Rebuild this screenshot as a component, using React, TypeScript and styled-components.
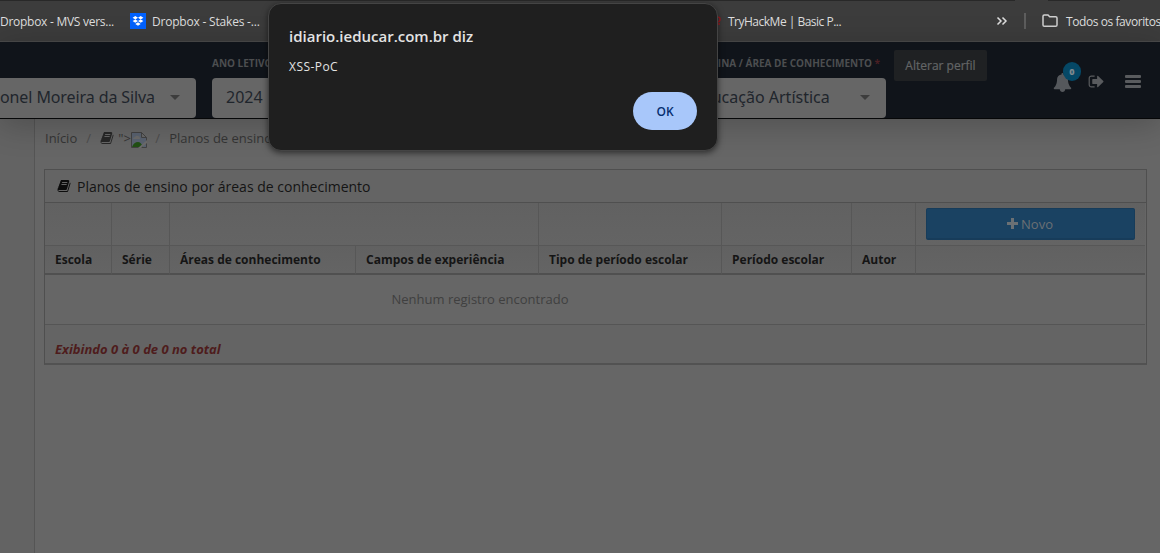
import React from "react";
import styled, { createGlobalStyle } from "styled-components";

const Global = createGlobalStyle`
  * { box-sizing: border-box; }
  body { margin: 0; background: #666; overflow: hidden; font-family: "Open Sans", sans-serif; }
`;

const Page = styled.div`
  position: relative;
  width: 1160px;
  height: 553px;
  display: flex;
  flex-direction: column;
  overflow: hidden;
  background: #666;
`;

const TabEdge = styled.div`
  flex: none;
  height: 1px;
  display: grid;
  grid-template-columns: 1015px 33px 72px 40px;
  background: #3c3c3c;
`;
const Edge = styled.i<{ $on?: boolean }>`
  background: ${(p) => (p.$on ? "#282828" : "#3c3c3c")};
`;

const Bookmarks = styled.div`
  flex: none;
  height: 41px;
  display: flex;
  align-items: center;
  background: #3c3c3c;
  border-bottom: 1px solid #4a4a4a;
  color: #dedede;
  font-size: 12px;
`;
const Bookmark = styled.div<{ $width: number; $gap?: number; $spacing?: number }>`
  flex: none;
  width: ${(p) => p.$width}px;
  display: flex;
  align-items: center;
  gap: ${(p) => p.$gap ?? 6}px;
  white-space: nowrap;
  letter-spacing: ${(p) => p.$spacing ?? 0}px;
  svg { flex: none; }
`;
const Divider = styled.div`
  flex: none;
  width: 2px;
  height: 16px;
  margin-right: 16px;
  background: #5d5d5d;
`;

const Header = styled.header`
  position: relative;
  flex: none;
  height: 77px;
  display: flex;
  align-items: flex-end;
  background: #10141a;
  border-bottom: 1px solid #060708;
  box-shadow: 0 6px 32px rgba(0, 0, 0, 0.22);
`;
const Field = styled.div<{ $width: number; $gap: number }>`
  flex: none;
  width: ${(p) => p.$width}px;
  margin-right: ${(p) => p.$gap}px;
`;
const Label = styled.div<{ $indent?: number }>`
  height: 22px;
  padding-left: ${(p) => p.$indent ?? 0}px;
  line-height: 14px;
  font-size: 10px;
  font-weight: 700;
  white-space: nowrap;
  color: #4c4e50;
  span { color: #4a1f23; }
`;
const Select = styled.div<{ $side?: "left" | "both"; $indent: number; $spacing?: number }>`
  height: 40px;
  display: flex;
  align-items: center;
  justify-content: space-between;
  padding: 0 16px 2px ${(p) => p.$indent}px;
  border-radius: ${(p) => (p.$side === "left" ? "0 4px 4px 0" : "4px")};
  background: #666;
  color: #1f252c;
  font-family: "Noto Sans", sans-serif;
  font-size: 16px;
  letter-spacing: ${(p) => p.$spacing ?? 0}px;
  white-space: nowrap;
`;
const Caret = styled.i`
  border: 5px solid transparent;
  border-top-color: #3d3d3d;
  border-bottom: 0;
`;
const ProfileButton = styled.button`
  align-self: flex-start;
  width: 93px;
  height: 31px;
  margin-top: 8px;
  padding: 0;
  border: 0;
  border-radius: 2px;
  background: #1f2123;
  color: #636566;
  font: 12px "Open Sans", sans-serif;
  -webkit-text-stroke: 0.2px #636566;
`;
const Tools = styled.div`
  align-self: flex-start;
  display: flex;
  align-items: flex-start;
  padding: 31px 0 0 66px;
  color: #55585c;
  svg { display: block; }
`;
const Notice = styled.div`
  position: relative;
  width: 35px;
`;
const Badge = styled.span`
  position: absolute;
  left: 10px;
  top: -11px;
  width: 18px;
  height: 19px;
  border-radius: 9px;
  background: #054866;
  color: #7e898f;
  font-size: 9px;
  font-weight: 800;
  line-height: 19px;
  text-align: center;
`;
const Exit = styled.div`
  width: 37px;
`;
const Bars = styled.div`
  display: grid;
  gap: 2px;
  width: 16px;
  padding-top: 2px;
  i { height: 3px; border-radius: 1px; background: #595b5e; }
`;

const Main = styled.main`
  flex: 1;
  display: flex;
`;
const Side = styled.aside`
  flex: none;
  width: 35px;
  background: #636363;
  border-right: 1px solid #555;
`;
const Content = styled.section`
  flex: 1;
  padding: 9px 13px 0 9px;
`;
const Crumbs = styled.nav`
  display: flex;
  align-items: center;
  height: 20px;
  padding-left: 1px;
  margin-bottom: 21px;
  font-size: 13px;
  color: #353535;
  white-space: nowrap;
  svg { flex: none; }
`;
const Slash = styled.span`
  width: 5px;
  margin: 0 9px;
  color: #4d4d4d;
`;
const Quote = styled.span`
  margin-left: 4px;
  width: 12px;
`;

const Panel = styled.div`
  border: 1px solid #4f4f4f;
  border-bottom: 2px solid #525252;
  width: 1103px;
  height: 196px;
`;
const PanelTitle = styled.div`
  height: 33px;
  display: flex;
  align-items: center;
  gap: 6px;
  padding-left: 12px;
  border-bottom: 1px solid #4f4f4f;
  background: #646464;
  color: #141414;
  font-size: 14px;
`;
const Table = styled.table`
  width: 1100px;
  table-layout: fixed;
  border-collapse: separate;
  border-spacing: 0;
  font-size: 12px;
`;
const Th = styled.th<{ $last?: boolean }>`
  height: 29px;
  padding: 0 0 1px 10px;
  text-align: left;
  font-weight: 700;
  color: #151515;
  white-space: nowrap;
  background: linear-gradient(#616161, #646464);
  border-bottom: 2px solid #505050;
  border-right: ${(p) => (p.$last ? 0 : 1)}px solid #575757;
`;
const FilterCell = styled.td<{ $last?: boolean }>`
  height: 43px;
  padding: 0 10px 0 10px;
  background: linear-gradient(#616161, #646464);
  border-bottom: 1px solid #575757;
  border-right: ${(p) => (p.$last ? 0 : 1)}px solid #575757;
`;
const Empty = styled.td`
  height: 50px;
  padding: 0 230px 1px 0;
  text-align: center;
  font-size: 13px;
  color: #404040;
  border-bottom: 1px solid #555;
`;
const Total = styled.td`
  height: 38px;
  padding: 10px 0 0 10px;
  font-size: 13px;
  font-weight: 700;
  font-style: italic;
  color: #4e1c1c;
  background: #646464;
`;
const NewButton = styled.button`
  display: flex;
  align-items: center;
  justify-content: center;
  gap: 3px;
  width: 209px;
  height: 32px;
  margin-top: -1px;
  padding: 1px 1px 0 0;
  border: 1px solid #173c5a;
  border-bottom-width: 2px;
  border-radius: 2px;
  background: #1a4262;
  color: #6b7074;
  font: 13px "Open Sans", sans-serif;
`;

const Dialog = styled.div`
  position: absolute;
  left: 268px;
  top: 3px;
  width: 450px;
  height: 148px;
  padding: 21px 20px 20px;
  display: flex;
  flex-direction: column;
  border: 1px solid #444;
  border-radius: 13px;
  background: #1f1f1f;
  color: #e3e3e3;
  box-shadow: 0 2px 6px rgba(0, 0, 0, 0.55);
`;
const DialogTitle = styled.h1`
  margin: 0;
  font-size: 15px;
  line-height: 22px;
  font-weight: 600;
`;
const Message = styled.p`
  margin: 11px 0 0;
  font-size: 12px;
  line-height: 18px;
  letter-spacing: 0.45px;
`;
const Ok = styled.button`
  align-self: flex-end;
  margin-top: auto;
  width: 64px;
  height: 38px;
  border: 0;
  border-radius: 19px;
  background: #a8c7fa;
  color: #062e6f;
  font: 600 12px "Open Sans", sans-serif;
`;

const Book = ({ size, color }: { size: number; color: string }) => (
  <svg width={size} height={size} viewBox="0 0 1792 1792" fill={color}>
    <path d="M1703 478q40 57 18 129l-275 906q-19 64-76.5 107.5t-122.5 43.5h-923q-77 0-148.5-53.5t-99.5-131.5q-24-67-2-127 0-4 3-27t4-37q1-8-3-21.5t-3-19.5q2-11 8-21t16.5-23.5 16.5-23.5q23-38 45-91.5t30-91.5q3-10 .5-30t-.5-28q3-11 17-28t17-23q21-36 42-92t25-90q1-9-2.5-32t.5-28q4-13 22-30.5t22-22.5q19-26 42.5-84.5t27.5-96.5q1-8-3-25.5t-2-26.5q2-8 9-18t18-23 17-21q8-12 16.5-30.5t15-35 16-36 19.5-32 26.5-23.5 36-11.5 47.5 5.5l-1 3q38-9 51-9h761q74 0 114 56t18 130l-274 906q-36 119-71.5 153.5t-128.5 34.5h-869q-27 0-38 15-11 16-1 43 24 70 144 70h923q29 0 56-15.5t35-41.5l300-987q7-22 5-57 38 15 59 43zm-1064 2q-4 13 2 22.5t20 9.5h608q13 0 25.5-9.5t16.5-22.5l21-64q4-13-2-22.5t-20-9.5h-608q-13 0-25.5 9.5t-16.5 22.5zm-83 256q-4 13 2 22.5t20 9.5h608q13 0 25.5-9.5t16.5-22.5l21-64q4-13-2-22.5t-20-9.5h-608q-13 0-25.5 9.5t-16.5 22.5z" />
  </svg>
);

const BrokenImage = () => (
  <svg width="16" height="16" viewBox="0 0 16 16" style={{ marginTop: 3, marginLeft: 1, marginRight: -1 }}>
    <path d="M.5.5h10l5 5v10H.5z" fill="#596270" stroke="#424242" />
    <path d="M10.5.5v5h5z" fill="#686868" stroke="#424242" />
    <path d="M2 7q0-2 2-2 1-2 3-1 2 0 2 3z" fill="#6b6b6b" />
    <path d="M1 15q2-5 6-5 3 0 5 5z" fill="#215014" />
    <path d="M7 16 16 8v3l-6 5z" fill="#6b6b6b" />
  </svg>
);

const columns = [
  { name: "Escola", width: 67 },
  { name: "Série", width: 58 },
  { name: "Áreas de conhecimento", width: 186 },
  { name: "Campos de experiência", width: 183 },
  { name: "Tipo de período escolar", width: 183 },
  { name: "Período escolar", width: 130 },
  { name: "Autor", width: 64 },
  { name: "", width: 229 },
];

export default function App() {
  return (
    <Page>
      <Global />
      <TabEdge>
        <Edge $on />
        <Edge />
        <Edge $on />
        <Edge />
      </TabEdge>
      <Bookmarks>
        <Bookmark $width={130} $spacing={-0.27}>Dropbox - MVS vers...</Bookmark>
        <Bookmark $width={572} $spacing={-0.2}>
          <svg width="16" height="16" viewBox="0 0 16 16">
            <path d="M0 0h16v16H0z" fill="#0061fe" />
            <path
              d="m5.3 3 2.7 1.7-2.7 1.7-2.7-1.7zm5.4 0 2.7 1.7-2.7 1.7L8 4.7zM5.3 6.4 8 8.1 5.3 9.8 2.6 8.1zm5.4 0 2.7 1.7-2.7 1.7L8 8.1zM8 9.3l2.7 1.7L8 12.7 5.3 11z"
              fill="#fff"
            />
          </svg>
          Dropbox - Stakes -...
        </Bookmark>
        <Bookmark $width={294} $gap={10} $spacing={-0.5}>
          <svg width="20" height="16" viewBox="0 0 20 16" fill="none" stroke="#9c1b22" strokeWidth="1.5" style={{ marginRight: -4 }}>
            <path d="M13 5q5-2 5 1t-3 3M14 11h4" />
          </svg>
          TryHackMe | Basic P...
        </Bookmark>
        <Bookmark $width={28}>
          <svg width="12" height="12" viewBox="0 0 12 12" fill="none" stroke="#dedede" strokeWidth="1.5">
            <path d="m1.500 2.500 3.500 3.500-3.500 3.500M6.500 2.500 10 6 6.500 9.500" />
          </svg>
        </Bookmark>
        <Divider />
        <Bookmark $width={118} $gap={8} $spacing={-0.42}>
          <svg width="16" height="14" viewBox="0 0 16 14" fill="none" stroke="#d0d0d0" strokeWidth="1.5">
            <path d="M1 2.300q0-1.300 1.300-1.300H6l1.700 1.700h6q1.300 0 1.300 1.300v7q0 1.300-1.300 1.300H2.300Q1 12.300 1 11z" />
          </svg>
          Todos os favoritos
        </Bookmark>
      </Bookmarks>

      <Header>
        <Field $width={196} $gap={16}>
          <Select $side="left" $indent={0} $spacing={-0.1}>
            onel Moreira da Silva <Caret />
          </Select>
        </Field>
        <Field $width={180} $gap={248}>
          <Label>ANO LETIVO</Label>
          <Select $indent={14}>
            2024 <Caret />
          </Select>
        </Field>
        <Field $width={246} $gap={8}>
          <Label $indent={40}>
            DISCIPLINA / ÁREA DE CONHECIMENTO <span>*</span>
          </Label>
          <Select $indent={53}>
            Educação Artística <Caret />
          </Select>
        </Field>
        <ProfileButton>Alterar perfil</ProfileButton>
        <Tools>
          <Notice>
            <svg width="19" height="19" viewBox="0 0 1792 1792" fill="#55585c">
              <path d="M1728 1408q0 52-38 90t-90 38h-448q0 106-75 181t-181 75-181-75-75-181h-448q-52 0-90-38t-38-90q50-42 91-88t85-119.500 74.500-158.500 50-206 19.500-260q0-152 117-282.500t307-158.500q-8-19-8-39 0-40 28-68t68-28 68 28 28 68q0 20-8 39 190 28 307 158.500t117 282.500q0 139 19.500 260t50 206 74.500 158.500 85 119.500 91 88z" />
            </svg>
            <Badge>0</Badge>
          </Notice>
          <Exit>
            <svg width="17" height="17" viewBox="0 0 1792 1792" fill="#595b5e">
              <path d="M704 1440q0 4 1 20t.5 26.500-3 23.500-10 19.500-20.500 6.500h-320q-119 0-203.500-84.500t-84.500-203.500v-704q0-119 84.500-203.500t203.500-84.500h320q13 0 22.500 9.500t9.500 22.500q0 4 1 20t.5 26.500-3 23.500-10 19.500-20.500 6.500h-320q-66 0-113 47t-47 113v704q0 66 47 113t113 47h312l11.500 1 11.500 3 8 5.500 7 9 2 13.500zm928-544q0 26-19 45l-544 544q-19 19-45 19t-45-19-19-45v-288h-448q-26 0-45-19t-19-45v-384q0-26 19-45t45-19h448v-288q0-26 19-45t45-19 45 19l544 544q19 19 19 45z" />
            </svg>
          </Exit>
          <Bars>
            <i />
            <i />
            <i />
          </Bars>
        </Tools>
      </Header>

      <Main>
        <Side />
        <Content>
          <Crumbs>
            Início
            <Slash>/</Slash>
            <Book size={14} color="#272727" />
            <Quote>"&gt;</Quote>
            <BrokenImage />
            <Slash>/</Slash>
            Planos de ensino
          </Crumbs>
          <Panel>
            <PanelTitle>
              <Book size={14} color="#0c0c0c" />
              Planos de ensino por áreas de conhecimento
            </PanelTitle>
            <Table>
              <colgroup>
                {columns.map((c) => (
                  <col key={c.width + c.name} style={{ width: c.width }} />
                ))}
              </colgroup>
              <tbody>
                <tr>
                  <FilterCell />
                  <FilterCell />
                  <FilterCell colSpan={2} />
                  <FilterCell />
                  <FilterCell />
                  <FilterCell />
                  <FilterCell $last>
                    <NewButton>
                      <svg width="11" height="11" viewBox="0 0 11 11" fill="#6b7074">
                        <path d="M4 0h3v4h4v3H7v4H4V7H0V4h4z" />
                      </svg>
                      Novo
                    </NewButton>
                  </FilterCell>
                </tr>
                <tr>
                  {columns.map((c) => (
                    <Th key={c.name} $last={!c.name}>
                      {c.name}
                    </Th>
                  ))}
                </tr>
                <tr>
                  <Empty colSpan={8}>Nenhum registro encontrado</Empty>
                </tr>
                <tr>
                  <Total colSpan={8}>Exibindo 0 à 0 de 0 no total</Total>
                </tr>
              </tbody>
            </Table>
          </Panel>
        </Content>
      </Main>

      <Dialog>
        <DialogTitle>idiario.ieducar.com.br diz</DialogTitle>
        <Message>XSS-PoC</Message>
        <Ok>OK</Ok>
      </Dialog>
    </Page>
  );
}
